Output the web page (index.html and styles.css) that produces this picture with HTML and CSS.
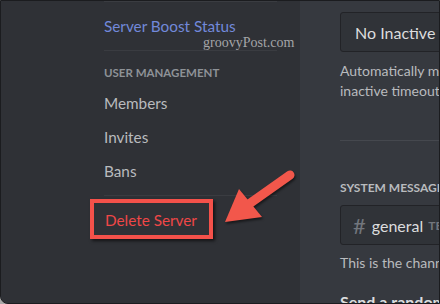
FILE: index.html
```html
<!DOCTYPE html>
<html lang="en">
<head>
  <meta charset="UTF-8" />
  <title>Server Settings - Delete Server</title>
  <link rel="stylesheet" href="styles.css">
</head>
<body>

  <div class="window">
    <aside class="sidebar">
      <div class="divider"></div>
      <div class="item boost">Server Boost Status</div>
      <div class="divider"></div>
      <div class="group-title">User Management</div>
      <div class="item">Members</div>
      <div class="item">Invites</div>
      <div class="item">Bans</div>
      <div class="divider"></div>
      <div class="item danger marked">Delete Server</div>

      <span class="watermark">groovyPost.com</span>

      <svg class="arrow" width="90" height="70" viewBox="215 165 90 70">
        <line x1="290" y1="175" x2="249" y2="204" stroke="#f2574b" stroke-width="9" stroke-linecap="round"/>
        <polygon points="225,222 239,189 262,217" fill="#f2574b"/>
      </svg>
    </aside>

    <main class="content">
      <div class="inner">
        <div class="select">No Inactive Channel</div>
        <p class="note">Automatically move members to this channel and mute them when they have been idle for longer than the<br>inactive timeout.</p>

        <div class="rule"></div>

        <h5 class="label">System Messages Channel</h5>
        <div class="select">
          <span class="hash">#</span>
          <span>general</span>
          <span class="tag">Text Channels</span>
        </div>
        <p class="note">This is the channel we send system event messages to. These can be turned off at any time.</p>

        <div class="toggle-title">Send a random welcome message when someone joins this server.</div>
      </div>
    </main>
  </div>

</body>
</html>
```

FILE: styles.css
```css
body {
  margin: 0;
  padding: 0;
  background: #a8a8a8;
  font-family: Lato, "Noto Sans", sans-serif;
}

.window {
  width: 440px;
  height: 304px;
  box-sizing: border-box;
  border: 1px solid #1b1c1f;
  border-bottom-left-radius: 8px;
  display: flex;
  overflow: hidden;
  background: #36393f;
}

/* left settings column */
.sidebar {
  position: relative;
  width: 299px;
  flex-shrink: 0;
  box-sizing: border-box;
  padding: 0 13px 0 93px;
  background: #2f3136;
}

.divider {
  height: 1px;
  margin: 0 10px 8px;
  background: #3a3c41;
}

.item + .divider {
  margin-top: 8px;
}

.item {
  padding: 6px 10px;
  margin-bottom: 2px;
  font-size: 15.3px;
  line-height: 20px;
  color: #b9bbbe;
  white-space: nowrap;
}

.boost { color: #7289da; }

.group-title {
  padding: 6px 10px;
  font-size: 11.5px;
  line-height: 16px;
  font-weight: 700;
  text-transform: uppercase;
  color: #8e9297;
}

.danger { color: #f04747; }

/* red annotation box round the item */
.marked {
  width: fit-content;
  margin: -5px 0 0 -4px;
  padding: 7px 12px 5px 11px;
  border: 4px solid #f4514a;
  box-shadow: 2px 2px 3px rgba(0,0,0,0.6);
}

.watermark {
  position: absolute;
  left: 202px;
  top: 34px;
  font-family: "Liberation Serif", serif;
  font-size: 14px;
  color: #a4a5a8;
}

.arrow {
  position: absolute;
  left: 214px;
  top: 164px;
  filter: drop-shadow(1px 2px 1px rgba(0,0,0,0.5));
}

/* right content column */
.content {
  flex: 1;
  overflow: hidden;
  padding-left: 40px;
}

.inner {
  width: 660px;
}

.select {
  height: 40px;
  box-sizing: border-box;
  margin-top: 11px;
  padding: 0 12px 0 14px;
  display: flex;
  align-items: center;
  border: 1px solid #222327;
  border-radius: 3px;
  background: #303338;
  font-size: 16px;
  color: #dcddde;
  white-space: nowrap;
}

.note {
  margin: 9px 0 0;
  font-size: 14px;
  line-height: 20px;
  color: #b9bbbe;
  white-space: nowrap;
}

.rule {
  height: 1px;
  margin-top: 39px;
  background: #45484e;
}

.label {
  margin: 39px 0 0;
  font-size: 12px;
  line-height: 16px;
  font-weight: 700;
  text-transform: uppercase;
  color: #b9bbbe;
}

.label + .select {
  margin-top: 9px;
  padding-left: 12px;
}

.label + .select + .note { margin-top: 8px; }

.hash {
  font-size: 22px;
  color: #72767d;
  margin-right: 6px;
}

.tag {
  margin-left: 5px;
  font-size: 12px;
  font-weight: 700;
  text-transform: uppercase;
  color: #72767d;
}

.toggle-title {
  margin-top: 19px;
  font-size: 16px;
  line-height: 20px;
  font-weight: 700;
  color: #dcddde;
  white-space: nowrap;
}
```
